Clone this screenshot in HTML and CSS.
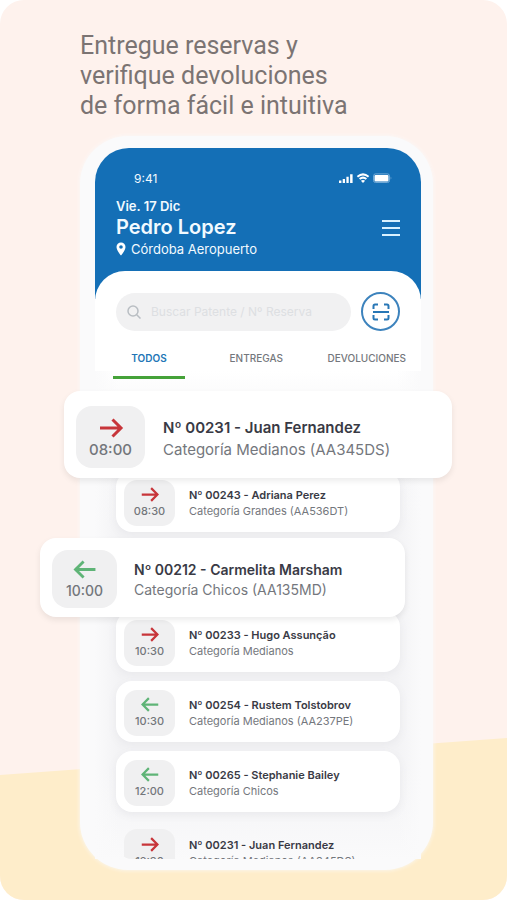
FILE: index.html
```html
<!DOCTYPE html>
<html lang="es">
<head>
<meta charset="utf-8">
<meta name="viewport" content="width=device-width, initial-scale=1">
<title>Reservas</title>
<link rel="stylesheet" href="styles.css">
</head>
<body>
<svg class="sprite" aria-hidden="true">
  <symbol id="arrow-right" viewBox="0 0 24 20"><path d="M1 10H22M13.500 1.500 22 10l-8.500 8.500"/></symbol>
  <symbol id="arrow-left" viewBox="0 0 24 20"><path d="M23 10H2M10.500 1.500 2 10l8.500 8.500"/></symbol>
</svg>
<main class="poster">
  <h1 class="headline">Entregue reservas y<br>verifique devoluciones<br>de forma fácil e intuitiva</h1>
  <div class="phone">
    <header class="top">
      <div class="status">
        <span>9:41</span>
        <svg class="status-icons" viewBox="0 0 54 12" aria-hidden="true">
          <path d="M0 8.500h2.400V11H0zM3.700 7h2.300v4H3.700zM7.400 4.800h2.300V11H7.400zM11.100 2.200h2.500V11h-2.500z"/>
          <path class="wave" d="M18.400 4.700q5.600-4.600 11.200 0M20.600 7q3.400-2.700 6.800 0"/>
          <path d="M24 11l-2.100-2.200q2.100-1.700 4.200 0z"/>
          <rect class="shell" x="34.500" y="1.900" width="16" height="8.600" rx="2"/>
          <rect x="35.500" y="2.900" width="14" height="6.600" rx="1"/>
          <path class="shell-tip" d="M51.600 4.500q1.800 1.600 0 3.300z"/>
        </svg>
      </div>
      <div class="user">
        <div>
          <p class="date">Vie. 17 Dic</p>
          <h2 class="name">Pedro Lopez</h2>
          <p class="place">
            <svg class="pin" viewBox="0 0 10 14" aria-hidden="true"><path fill-rule="evenodd" d="M5 .5A4.500 4.500 0 0 0 .5 5C.5 8.300 5 13.500 5 13.500S9.500 8.300 9.500 5A4.500 4.500 0 0 0 5 .5zM5 3.200a1.800 1.800 0 1 1 0 3.600 1.800 1.800 0 0 1 0-3.600z"/></svg>
            Córdoba Aeropuerto
          </p>
        </div>
        <button class="menu" type="button" aria-label="Menú">
          <svg viewBox="0 0 18 18" aria-hidden="true"><path d="M0 2h18M0 9h18M0 16h18"/></svg>
        </button>
      </div>
    </header>
    <section class="sheet">
      <div class="tools">
        <label class="search">
          <svg viewBox="0 0 14 14" aria-hidden="true"><circle cx="6" cy="6" r="5"/><path d="M9.700 9.700 13.500 13.500"/></svg>
          <input type="search" placeholder="Buscar Patente / Nº Reserva" aria-label="Buscar Patente / Nº Reserva">
        </label>
        <button class="scan" type="button" aria-label="Escanear">
          <svg viewBox="0 0 18 18" aria-hidden="true"><path d="M1.500 6V3Q1.500 1.500 3 1.500H6M12 1.500h3q1.500 0 1.500 1.500V6M1.500 12v3q0 1.500 1.500 1.500H6M12 16.500h3q1.500 0 1.500-1.500V12M1 9h16"/></svg>
        </button>
      </div>
      <nav class="tabs">
        <button class="tab active" type="button">TODOS</button>
        <button class="tab" type="button">ENTREGAS</button>
        <button class="tab" type="button">DEVOLUCIONES</button>
      </nav>
      <ul class="list">
        <li class="card large">
          <div class="slot out"><svg aria-hidden="true"><use href="#arrow-right"/></svg><time>08:00</time></div>
          <div class="info"><h3>Nº 00231 - Juan Fernandez</h3><p>Categoría Medianos (AA345DS)</p></div>
        </li>
        <li class="card">
          <div class="slot out"><svg aria-hidden="true"><use href="#arrow-right"/></svg><time>08:30</time></div>
          <div class="info"><h3>Nº 00243 - Adriana Perez</h3><p>Categoría Grandes (AA536DT)</p></div>
        </li>
        <li class="card medium">
          <div class="slot in"><svg aria-hidden="true"><use href="#arrow-left"/></svg><time>10:00</time></div>
          <div class="info"><h3>Nº 00212 - Carmelita Marsham</h3><p>Categoría Chicos (AA135MD)</p></div>
        </li>
        <li class="card">
          <div class="slot out"><svg aria-hidden="true"><use href="#arrow-right"/></svg><time>10:30</time></div>
          <div class="info"><h3>Nº 00233 - Hugo Assunção</h3><p>Categoría Medianos</p></div>
        </li>
        <li class="card">
          <div class="slot in"><svg aria-hidden="true"><use href="#arrow-left"/></svg><time>10:30</time></div>
          <div class="info"><h3>Nº 00254 - Rustem Tolstobrov</h3><p>Categoría Medianos (AA237PE)</p></div>
        </li>
        <li class="card">
          <div class="slot in"><svg aria-hidden="true"><use href="#arrow-left"/></svg><time>12:00</time></div>
          <div class="info"><h3>Nº 00265 - Stephanie Bailey</h3><p>Categoría Chicos</p></div>
        </li>
        <li class="card cut">
          <div class="slot out"><svg aria-hidden="true"><use href="#arrow-right"/></svg><time>12:30</time></div>
          <div class="info"><h3>Nº 00231 - Juan Fernandez</h3><p>Categoría Medianos (AA345DS)</p></div>
        </li>
      </ul>
    </section>
  </div>
</main>
</body>
</html>
```

FILE: styles.css
```css
* { box-sizing: border-box; margin: 0; padding: 0; }

body {
  background: #fff;
  font-family: Inter, "Liberation Sans", sans-serif;
}

button { border: 0; background: none; font: inherit; cursor: pointer; }

.sprite { position: absolute; width: 0; height: 0; }

.poster {
  position: relative;
  isolation: isolate;
  overflow: hidden;
  min-height: 100vh;
  padding: 31px 74px 30px 80px;
  border-radius: 24px;
  background: #fef2ed;
}

/* slanted yellow floor */
.poster::before {
  content: "";
  position: absolute;
  z-index: -1;
  inset: auto 0 0;
  height: 162px;
  background: #feedca;
  clip-path: polygon(0 37px, 100% 0, 100% 100%, 0 100%);
}

.headline {
  color: #7b7473;
  font: 400 25px/30px Roboto, sans-serif;
}

.phone {
  margin-top: 15px;
  padding: 12px 12px 11px 15px;
  border-radius: 48px;
  background: #fafafb;
  box-shadow: 0 0 4px #fafafb;
}

.top {
  padding: 20px 21px 41px;
  border-radius: 34px 34px 0 0;
  background: #146fb6;
  color: #f2faff;
}

.status {
  display: flex;
  align-items: center;
  justify-content: space-between;
  height: 20px;
  padding: 0 7px 0 18px;
  font-size: 12px;
}

.status-icons { width: 54px; height: 12px; fill: #fff; }
.status-icons .wave { fill: none; stroke: #fff; stroke-width: 2; }
.status-icons .shell { fill: none; stroke: #6fa8d6; }
.status-icons .shell-tip { fill: #6fa8d6; }

.user {
  display: flex;
  align-items: center;
  justify-content: space-between;
  margin-top: 10px;
}

.date { font-size: 13px; font-weight: 600; line-height: 16px; }
.name { font-size: 20px; font-weight: 600; line-height: 26px; }

.place {
  display: flex;
  align-items: center;
  gap: 5px;
  font-size: 13px;
  line-height: 18px;
}

.pin { width: 10px; height: 14px; fill: #fff; }

.menu svg {
  display: block;
  width: 18px;
  height: 18px;
  stroke: #d8f1ff;
  stroke-width: 2;
}

.sheet {
  margin-top: -28px;
  padding: 21px 21px 0;
  border-radius: 30px 30px 0 0;
  background:
    linear-gradient(90deg, #fafafb, #fafafb00 24px calc(100% - 24px), #fafafb) 0 100px no-repeat,
    linear-gradient(#fff 100px, #fafafb 130px, #f3f3f5 250px, #f3f3f5 500px, #fafafb);
}

.tools { display: flex; align-items: center; gap: 10px; }

.search {
  display: flex;
  flex: 1;
  align-items: center;
  gap: 10px;
  min-width: 0;
  height: 38px;
  padding: 0 11px;
  border-radius: 19px;
  background: #f1f1f2;
}

.search svg {
  flex: none;
  width: 14px;
  height: 14px;
  fill: none;
  stroke: #b9bec3;
  stroke-width: 1.500;
}

.search input {
  flex: 1;
  min-width: 0;
  border: 0;
  outline: 0;
  background: none;
  font: 400 12px/16px Inter, sans-serif;
}

.search input::placeholder { color: #dddfe2; opacity: 1; }

.scan {
  display: grid;
  place-items: center;
  width: 39px;
  height: 39px;
  border: 2px solid #3d83bd;
  border-radius: 50%;
}

.scan svg {
  width: 18px;
  height: 18px;
  fill: none;
  stroke: #2877b6;
  stroke-width: 2;
}

.tabs {
  display: flex;
  justify-content: space-between;
  margin: 8px -6px 0 -3px;
}

.tab {
  height: 40px;
  border-bottom: 3px solid transparent;
  color: #74777c;
  font-size: 10px;
  font-weight: 500;
}

.tab.active {
  width: 72px;
  border-color: #45a239;
  color: #2275b6;
  font-weight: 600;
}

.list {
  display: grid;
  gap: 9px;
  margin-top: 22px;
  list-style: none;
}

.card {
  display: flex;
  align-items: center;
  gap: 14px;
  height: 61px;
  padding: 2px 8px 0;
  border-radius: 16px;
  background: #fff;
  box-shadow: 0 3px 8px #e9e9ec;
}

.slot {
  display: flex;
  flex: none;
  flex-direction: column;
  align-items: center;
  justify-content: center;
  gap: 2px;
  width: 51px;
  height: 46px;
  border-radius: 13px;
  background: #f0f0f1;
  color: #73767b;
  font-size: 11px;
  font-weight: 500;
  line-height: 14px;
}

.slot svg {
  width: 18px;
  height: 15px;
  fill: none;
  stroke-width: 3;
}

.out svg { stroke: #c7353a; }
.in svg { stroke: #5fb477; }

.info {
  color: #74777d;
  font-size: 11px;
  line-height: 16px;
  white-space: nowrap;
}

.info h3 { color: #393a45; font-size: inherit; font-weight: 600; }
.info p { color: #74777d; }

/* enlarged cards reach past the phone's edges */
.large, .medium {
  position: relative;
  z-index: 1;
  box-shadow: 0 3px 6px #00000014;
}

.large {
  gap: 18px;
  height: 87px;
  margin: -10px -52px -16px;
  padding: 4px 12px 0;
}

.large .slot {
  width: 69px;
  height: 62px;
  padding-top: 4px;
  border-radius: 16px;
  font-size: 15px;
  line-height: 20px;
}

.large .slot svg { width: 26px; height: 20px; }
.large .info { padding-top: 4px; font-size: 15px; line-height: 22px; }

.medium {
  gap: 17px;
  height: 79px;
  margin: -3px -5px -15px -76px;
  padding: 2px 12px 0;
}

.medium .slot {
  width: 65px;
  height: 58px;
  padding-top: 4px;
  border-radius: 16px;
  font-size: 14px;
  line-height: 20px;
}

.medium .slot svg { width: 24px; height: 19px; }
.medium .info { padding-top: 2px; font-size: 14px; line-height: 20px; }

/* last row runs off the bottom of the screen */
.cut {
  align-items: flex-start;
  height: 38px;
  padding-top: 8px;
  overflow: hidden;
  background: none;
  box-shadow: none;
}

.cut .info { padding-top: 8px; }
```
